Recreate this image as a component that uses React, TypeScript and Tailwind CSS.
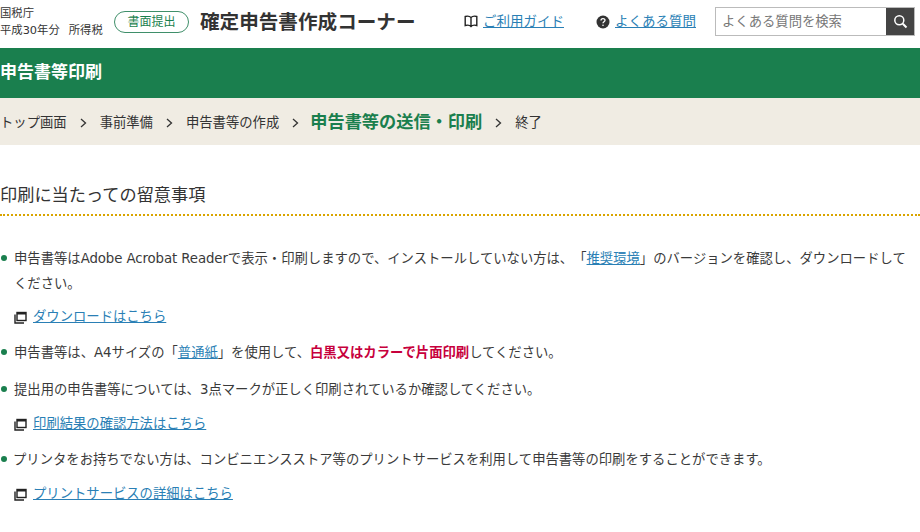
const font = "font-['DejaVu_Sans','Noto_Sans_CJK_JP',sans-serif] [text-spacing-trim:space-all]"

function NewWindowIcon() {
  return (
    <svg width="13" height="13" viewBox="0 0 13 13" className="shrink-0" fill="none" stroke="#222">
      <rect x="3" y="1.500" width="9" height="8" strokeWidth="1.400" />
      <path d="M3 2.500h9" strokeWidth="2" />
      <path d="M1 3.500v8.500h9" strokeWidth="1.400" />
    </svg>
  )
}

function SubLink({ children }: { children: string }) {
  return (
    <p className="flex items-center gap-[6px] pl-[14px] text-[13.33px] leading-[24px]">
      <NewWindowIcon />
      <a className="text-[#2a7fb5] underline">{children}</a>
    </p>
  )
}

function Item({ children }: { children: React.ReactNode }) {
  return (
    <li className="relative pl-[14px] text-[13.33px] leading-[25px] text-[#3a3a3a]">
      <span className="absolute left-[1px] top-[9px] h-[6px] w-[6px] rounded-full bg-[#1a7f4e]" />
      {children}
    </li>
  )
}

function Sep() {
  return (
    <span className="mx-[13px]">
      <svg width="7" height="10" viewBox="0 0 7 10" fill="none" stroke="#333" strokeWidth="1.300">
        <path d="M1 1l4.500 4L1 9" />
      </svg>
    </span>
  )
}

export default function App() {
  return (
    <div className={`${font} h-[532px] w-[920px] overflow-hidden bg-white text-[#333]`}>
      <header className="flex h-[48px] items-center pb-[5px]">
        <div className="w-[114px] pt-[1px] text-[11.33px] leading-[17px]">
          <div>国税庁</div>
          <div>
            平成30年分<span className="ml-[9px]">所得税</span>
          </div>
        </div>
        <span className="flex h-[22px] w-[75px] items-center justify-center rounded-full border border-[#3f8f6a] text-[12px] text-[#1a7f4e]">
          書面提出
        </span>
        <h1 className="ml-[11px] mt-[3px] text-[19.6px] font-bold text-[#333]">確定申告書作成コーナー</h1>
        <div className="ml-auto flex items-center">
          <svg width="14" height="13" viewBox="0 0 14 13" fill="none" stroke="#222" strokeWidth="1.400" className="mr-[5px]">
            <path d="M7 2.500C6 1.500 3 1 1.200 1.500v9c2-.5 4.800-.2 5.800 1 1-1.200 3.800-1.500 5.800-1v-9C11 1 8 1.500 7 2.500zM7 2.500v9" />
          </svg>
          <a className="text-[13.5px] text-[#2a7fb5] underline">ご利用ガイド</a>
          <svg width="14" height="14" viewBox="0 0 14 14" className="ml-[32px] mr-[5px]">
            <circle cx="7" cy="7" r="6.500" fill="#333" />
            <path d="M5 5.500C5 3 9 3 9 5.300c0 1.500-2 1.500-2 3" fill="none" stroke="#fff" strokeWidth="1.300" />
            <circle cx="7" cy="10.300" r=".8" fill="#fff" />
          </svg>
          <a className="text-[13.5px] text-[#2a7fb5] underline">よくある質問</a>
          <div className="ml-[19px] mr-[5px] flex h-[29px] w-[200px] border border-[#bbb]">
            <span className="flex-1 pl-[6px] text-[13.33px] leading-[27px] text-[#777]">よくある質問を検索</span>
            <span className="flex w-[28px] items-center justify-center bg-[#444]">
              <svg width="15" height="15" viewBox="0 0 15 15" fill="none" stroke="#fff" strokeWidth="1.500">
                <circle cx="6.300" cy="6.300" r="4.500" />
                <path d="M9.800 9.800L13.500 13.500" strokeWidth="2" />
              </svg>
            </span>
          </div>
        </div>
      </header>
      <div className="flex h-[50px] items-center bg-[#1a7f4e] text-[17px] font-bold text-white">申告書等印刷</div>
      <nav className="flex h-[47px] items-center bg-[#f0ece3] pt-[2px] text-[13.33px]">
        <span>トップ画面</span>
        <Sep />
        <span>事前準備</span>
        <Sep />
        <span>申告書等の作成</span>
        <Sep />
        <span className="ml-[-2px] text-[17.2px] font-bold text-[#1a7f4e]">申告書等の送信・印刷</span>
        <Sep />
        <span>終了</span>
      </nav>
      <h2 className="mt-[38px] border-b-2 border-dotted border-[#d9a400] pb-[7px] text-[17.2px] leading-[24px]">
        印刷に当たっての留意事項
      </h2>
      <ul className="mt-[30px]">
        <Item>
          申告書等は<span className="tracking-[-0.1px]">Adobe Acrobat Reader</span>で表示・印刷しますので、インストールしていない方は、「
          <a className="text-[#2a7fb5] underline">推奨環境</a>
          」のバージョンを確認し、ダウンロードして
          <br />
          ください。
        </Item>
        <div className="mt-[9px]"><SubLink>ダウンロードはこちら</SubLink></div>
        <div className="mt-[11px]">
          <Item>
            申告書等は、A4サイズの「<a className="text-[#2a7fb5] underline">普通紙</a>」を使用して、
            <strong className="text-[#c7003c]">白黒又はカラーで片面印刷</strong>してください。
          </Item>
        </div>
        <div className="mt-[12px]">
          <Item>提出用の申告書等については、3点マークが正しく印刷されているか確認してください。</Item>
        </div>
        <div className="mt-[10px]"><SubLink>印刷結果の確認方法はこちら</SubLink></div>
        <div className="mt-[11px]">
          <Item>
            <span className="ml-[-1px]">プリンタをお持ちでない方は、コンビニエンスストア等のプリントサービスを利用して申告書等の印刷をすることができます。</span>
          </Item>
        </div>
        <div className="mt-[10px]"><SubLink>プリントサービスの詳細はこちら</SubLink></div>
      </ul>
    </div>
  )
}
